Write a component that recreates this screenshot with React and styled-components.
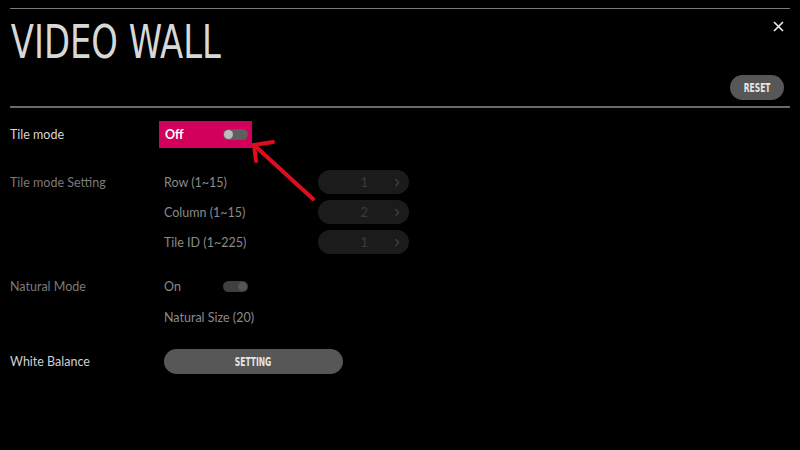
import styled, { createGlobalStyle } from "styled-components";

const GlobalStyle = createGlobalStyle`
  html, body {
    margin: 0;
    background: #000;
  }
  body {
    font-family: Lato, "Open Sans", sans-serif;
  }
`;

const Page = styled.div`
  position: relative;
  width: 800px;
  height: 450px;
  padding: 8px 10px 0 10px;
  box-sizing: border-box;
  background: #000;
  overflow: hidden;
`;

const Header = styled.div`
  position: relative;
  height: 100px;
  border-top: 1px solid #7a7a7a;
  border-bottom: 2px solid #6a6a6a;
  box-sizing: border-box;
`;

const Title = styled.h1`
  margin: 0;
  padding-top: 8px;
  padding-left: 1px;
  font-family: "DejaVu Sans Condensed", sans-serif;
  font-weight: 400;
  font-size: 47px;
  line-height: 49px;
  color: #d8d8d8;
  transform: scaleX(0.8);
  transform-origin: left center;
`;

const Close = styled.svg`
  position: absolute;
  right: 6px;
  top: 12px;
`;

const Pill = styled.button`
  border: none;
  border-radius: 13px;
  background: #575757;
  color: #e6e6e6;
  font-family: "DejaVu Sans Condensed", sans-serif;
  font-weight: 700;
  font-size: 12px;
  padding: 0;
  width: ${(p) => p.w}px;
  height: ${(p) => p.h}px;
  cursor: pointer;
`;

const Narrow = styled.span`
  display: inline-block;
  transform: scaleX(0.7);
`;

const ResetWrap = styled.div`
  position: absolute;
  right: 6px;
  bottom: 6px;
`;

const Row = styled.div`
  display: grid;
  grid-template-columns: 154px 154px 92px;
  align-items: center;
  height: ${(p) => p.h}px;
  margin-top: ${(p) => p.mt}px;
  font-size: 12.5px;
`;

const Label = styled.div`
  color: ${(p) => p.c};
`;

const Item = styled.div`
  color: ${(p) => p.c};
`;

const Highlight = styled.div`
  grid-column: 2 / 3;
  display: flex;
  align-items: center;
  justify-content: space-between;
  width: 93px;
  height: 27px;
  margin-left: -5px;
  padding: 0 4px 0 6px;
  box-sizing: border-box;
  background: #d2005a;
  color: #fff;
  font-weight: 700;
`;

const Toggle = styled.div`
  position: relative;
  width: 25px;
  height: 11px;
  border-radius: 6px;
  background: ${(p) => p.track};
  &::after {
    content: "";
    position: absolute;
    top: 1px;
    ${(p) => (p.on ? "right: 1px;" : "left: 1px;")}
    width: 9px;
    height: 9px;
    border-radius: 50%;
    background: ${(p) => p.knob};
  }
`;

const Between = styled.div`
  display: flex;
  align-items: center;
  justify-content: space-between;
  width: 84px;
  color: #8a8a8a;
`;

const Stepper = styled.div`
  display: flex;
  align-items: center;
  justify-content: flex-end;
  width: 91px;
  height: 24px;
  border-radius: 12px;
  background: #1b1b1b;
  color: #3c3c3c;
  font-size: 13px;
  box-sizing: border-box;
  padding-right: 9px;
  gap: 26px;
`;

const Arrow = styled.svg`
  position: absolute;
  left: 245px;
  top: 133px;
`;

const steppers = [
  { label: "Row (1~15)", value: 1, mt: 22 },
  { label: "Column (1~15)", value: 2, mt: 6 },
  { label: "Tile ID (1~225)", value: 1, mt: 6 },
];

function Chevron() {
  return (
    <svg width="6" height="9" viewBox="0 0 6 9">
      <path d="M1.5 1 L4.5 4.5 L1.5 8" stroke="#3c3c3c" strokeWidth="1.6" fill="none" />
    </svg>
  );
}

export default function App() {
  return (
    <Page>
      <GlobalStyle />
      <Header>
        <Title>VIDEO WALL</Title>
        <Close width="11" height="11" viewBox="0 0 11 11">
          <path d="M1 1 L10 10 M10 1 L1 10" stroke="#eee" strokeWidth="1.6" />
        </Close>
        <ResetWrap>
          <Pill w={54} h={25}>
            <Narrow>RESET</Narrow>
          </Pill>
        </ResetWrap>
      </Header>

      <Row h={27} mt={13}>
        <Label c="#d6d6d6">Tile mode</Label>
        <Highlight>
          <span>Off</span>
          <Toggle track="#5e5e5e" knob="#bdbdbd" />
        </Highlight>
      </Row>

      {steppers.map((s, i) => (
        <Row key={s.label} h={24} mt={s.mt}>
          <Label c="#7a7a7a">{i === 0 ? "Tile mode Setting" : ""}</Label>
          <Item c="#8a8a8a">{s.label}</Item>
          <Stepper>
            <span>{s.value}</span>
            <Chevron />
          </Stepper>
        </Row>
      ))}

      <Row h={24} mt={20}>
        <Label c="#7a7a7a">Natural Mode</Label>
        <Between>
          <span>On</span>
          <Toggle on track="#3f3f3f" knob="#555" />
        </Between>
      </Row>

      <Row h={24} mt={7}>
        <Label />
        <Item c="#8a8a8a">Natural Size (20)</Item>
      </Row>

      <Row h={25} mt={20}>
        <Label c="#cfcfcf">White Balance</Label>
        <div>
          <Pill w={179} h={25}>
            <Narrow>SETTING</Narrow>
          </Pill>
        </div>
      </Row>

      <Arrow width="80" height="72" viewBox="0 0 80 72">
        <g stroke="#e00d1e" strokeWidth="4" strokeLinecap="round" fill="none">
          <path d="M68 66 L9 12" />
          <path d="M28 9 L9 12 L11 28" />
        </g>
      </Arrow>
    </Page>
  );
}
